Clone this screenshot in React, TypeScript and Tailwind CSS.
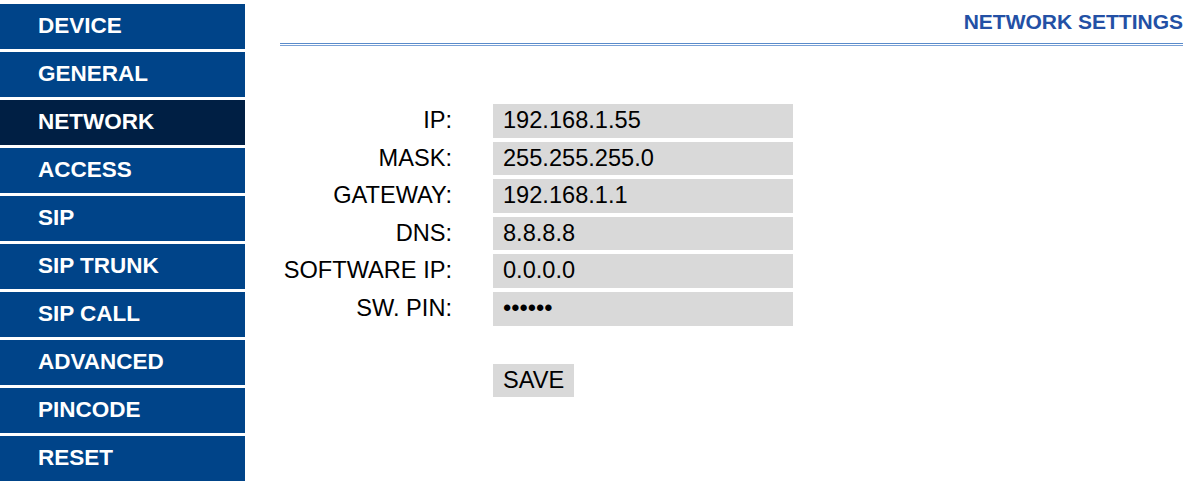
import React from 'react';

interface FieldRow {
    label: string;
    value: string;
}

const menuItems = ['DEVICE', 'GENERAL', 'NETWORK', 'ACCESS', 'SIP', 'SIP TRUNK', 'SIP CALL', 'ADVANCED', 'PINCODE', 'RESET'];

const fields: FieldRow[] = [
    { label: 'IP:', value: '192.168.1.55' },
    { label: 'MASK:', value: '255.255.255.0' },
    { label: 'GATEWAY:', value: '192.168.1.1' },
    { label: 'DNS:', value: '8.8.8.8' },
    { label: 'SOFTWARE IP:', value: '0.0.0.0' },
    { label: 'SW. PIN:', value: '\u2022\u2022\u2022\u2022\u2022\u2022' },
];

const App: React.FC = () => {
    const active = 'NETWORK';

    return (
        <div className="flex w-[1190px] h-[485px] bg-white font-['Liberation_Sans',Arial,sans-serif] overflow-hidden">
            {/* left menu */}
            <nav className="w-[245px] shrink-0 pt-[4px] flex flex-col gap-[3px]">
                {menuItems.map(item => (
                    <div
                        key={item}
                        className={`h-[45px] pl-[38px] text-[22.5px] leading-[44px] font-bold text-white whitespace-nowrap ${item === active ? 'bg-[#001f44]' : 'bg-[#004489]'}`}
                    >
                        {item}
                    </div>
                ))}
            </nav>

            {/* content */}
            <main className="flex-1 pl-[35px] pr-[7px]">
                <header className="pt-[10px]">
                    <h1 className="text-right text-[21px] leading-[24px] font-bold text-[#2350a5]">NETWORK SETTINGS</h1>
                    <div className="mt-[9px] h-[3px] border-t border-b border-t-[#5a8bcb] border-b-[#7aa1d6]" />
                </header>

                <div className="mt-[58px] flex flex-col gap-[4px]">
                    {fields.map(field => (
                        <div key={field.label} className="flex items-center">
                            <div className="w-[172px] text-right text-[23.6px] leading-[33.6px] text-black whitespace-nowrap">{field.label}</div>
                            <div className="ml-[41px] w-[300px] h-[33.6px] pl-[10px] bg-[#d9d9d9] text-[23.6px] leading-[33.6px] text-black whitespace-nowrap">
                                {field.value}
                            </div>
                        </div>
                    ))}
                </div>

                <div className="mt-[38.4px] pl-[213px]">
                    <button className="w-[81px] h-[33px] pl-[10px] text-left bg-[#d9d9d9] text-[23.6px] leading-[33px] text-black">SAVE</button>
                </div>
            </main>
        </div>
    );
};

export default App;
